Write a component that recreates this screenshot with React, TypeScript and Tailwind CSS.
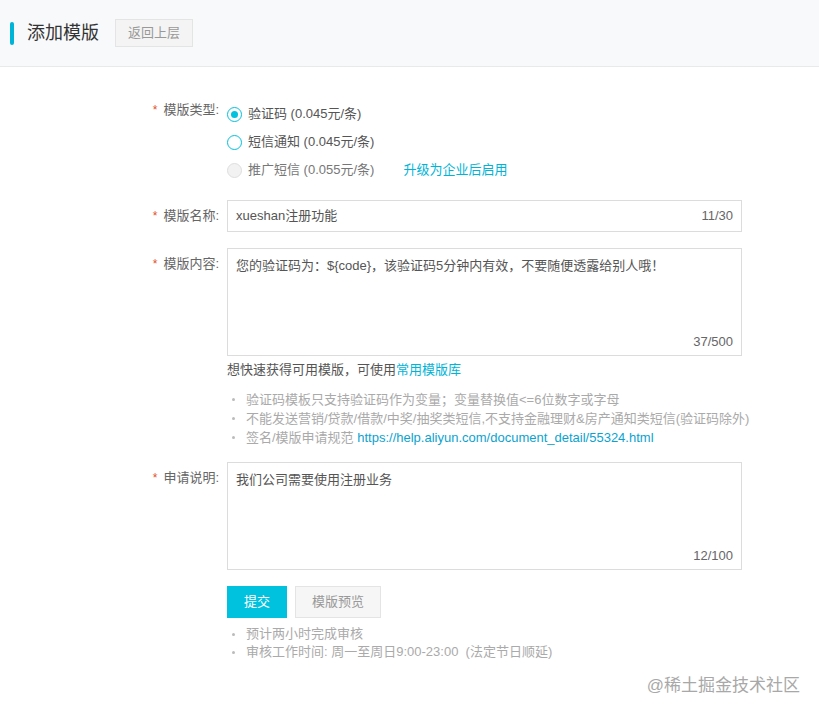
import React from "react";

const font = { fontFamily: '"Liberation Sans", "Noto Sans CJK SC", sans-serif' };

function Label({ text, pt }: { text: string; pt: string }) {
  return (
    <div className={`w-[80px] shrink-0 text-right text-[13px] leading-[20px] text-[#666] ${pt}`}>
      <span className="text-[#e4512c] mr-[6px] text-[12px]">*</span>
      {text}
    </div>
  );
}

function Radio({ state }: { state: "checked" | "empty" | "disabled" }) {
  if (state === "checked")
    return (
      <span className="w-[15px] h-[15px] rounded-full border border-[#00c1de] flex items-center justify-center bg-white">
        <span className="w-[7px] h-[7px] rounded-full bg-[#00c1de]" />
      </span>
    );
  if (state === "empty")
    return <span className="w-[15px] h-[15px] rounded-full border border-[#00c1de] bg-white" />;
  return <span className="w-[15px] h-[15px] rounded-full border border-[#dedede] bg-[#f2f2f2]" />;
}

function Bullet({ children }: { children: React.ReactNode }) {
  return (
    <li className="flex items-center">
      <span className="w-[3px] h-[3px] rounded-full bg-[#bbb] ml-[5px] mr-[11px]" />
      <span>{children}</span>
    </li>
  );
}

export default function App() {
  return (
    <div className="relative min-h-[716px] bg-white" style={font}>
      <div className="h-[67px] bg-[#f8f9fb] border-b border-[#e8e9eb] flex items-center pl-[10px]">
        <span className="w-[4px] h-[23px] bg-[#00b4d8] rounded-[2px]" />
        <span className="ml-[13px] text-[18px] text-[#333] leading-none">添加模版</span>
        <button className="ml-[16px] h-[28px] px-[12px] bg-[#f4f4f4] border border-[#e4e4e4] text-[13px] text-[#999]">
          返回上层
        </button>
      </div>

      <div className="pl-[139px] pt-[33px]">
        <div className="flex">
          <Label text="模版类型:" pt="pt-[0px]" />
          <div className="ml-[8px] flex flex-col text-[13px] text-[#555]">
            <div className="h-[28px] flex items-center">
              <Radio state="checked" />
              <span className="ml-[6px]">验证码 (0.045元/条)</span>
            </div>
            <div className="h-[28px] flex items-center">
              <Radio state="empty" />
              <span className="ml-[6px]">短信通知 (0.045元/条)</span>
            </div>
            <div className="h-[28px] flex items-center">
              <Radio state="disabled" />
              <span className="ml-[6px] text-[#777]">推广短信 (0.055元/条)</span>
              <span className="ml-[29px] text-[#00b4d8]">升级为企业后启用</span>
            </div>
          </div>
        </div>

        <div className="flex mt-[16px]">
          <Label text="模版名称:" pt="pt-[6px]" />
          <div className="ml-[8px] w-[515px] h-[32px] border border-[#dcdcdc] flex items-center justify-between px-[8px] text-[13px]">
            <span className="text-[#555]">xueshan注册功能</span>
            <span className="text-[#666]">11/30</span>
          </div>
        </div>

        <div className="flex mt-[16px]">
          <Label text="模版内容:" pt="pt-[6px]" />
          <div className="ml-[8px] flex flex-col">
            <div className="w-[515px] h-[108px] border border-[#dcdcdc] flex flex-col justify-between pl-[8px] pr-[8px] pt-[7px] pb-[3px] text-[13px] leading-[20px]">
              <span className="text-[#555]">您的验证码为：${"{code}"}，该验证码5分钟内有效，不要随便透露给别人哦！</span>
              <span className="self-end text-[#666]">37/500</span>
            </div>
            <div className="mt-[4px] text-[13px] leading-[20px] text-[#555]">
              想快速获得可用模版，可使用<span className="text-[#00b4d8]">常用模版库</span>
            </div>
            <ul className="mt-[10px] text-[13px] leading-[19px] text-[#aaa]">
              <Bullet>验证码模板只支持验证码作为变量；变量替换值&lt;=6位数字或字母</Bullet>
              <Bullet>不能发送营销/贷款/借款/中奖/抽奖类短信,不支持金融理财&amp;房产通知类短信(验证码除外)</Bullet>
              <Bullet>
                签名/模版申请规范 <span className="text-[#0aa3cf]">https://help.aliyun.com/document_detail/55324.html</span>
              </Bullet>
            </ul>
          </div>
        </div>

        <div className="flex mt-[15px]">
          <Label text="申请说明:" pt="pt-[6px]" />
          <div className="ml-[8px] flex flex-col">
            <div className="w-[515px] h-[108px] border border-[#dcdcdc] flex flex-col justify-between pl-[8px] pr-[8px] pt-[7px] pb-[3px] text-[13px] leading-[20px]">
              <span className="text-[#555]">我们公司需要使用注册业务</span>
              <span className="self-end text-[#666]">12/100</span>
            </div>
            <div className="mt-[16px] flex gap-[8px]">
              <button className="w-[60px] h-[32px] bg-[#00c1de] text-white text-[13px]">提交</button>
              <button className="w-[86px] h-[32px] bg-[#f6f6f6] border border-[#e4e4e4] text-[#999] text-[13px]">
                模版预览
              </button>
            </div>
            <ul className="mt-[7px] text-[13px] leading-[18px] text-[#aaa]">
              <Bullet>预计两小时完成审核</Bullet>
              <Bullet>审核工作时间: 周一至周日9:00-23:00&nbsp;&nbsp;(法定节日顺延)</Bullet>
            </ul>
          </div>
        </div>
      </div>

      <div className="absolute right-[19px] top-[674px] text-[17px] leading-[24px] text-[#a8a8a8]">
        @稀土掘金技术社区
      </div>
    </div>
  );
}
